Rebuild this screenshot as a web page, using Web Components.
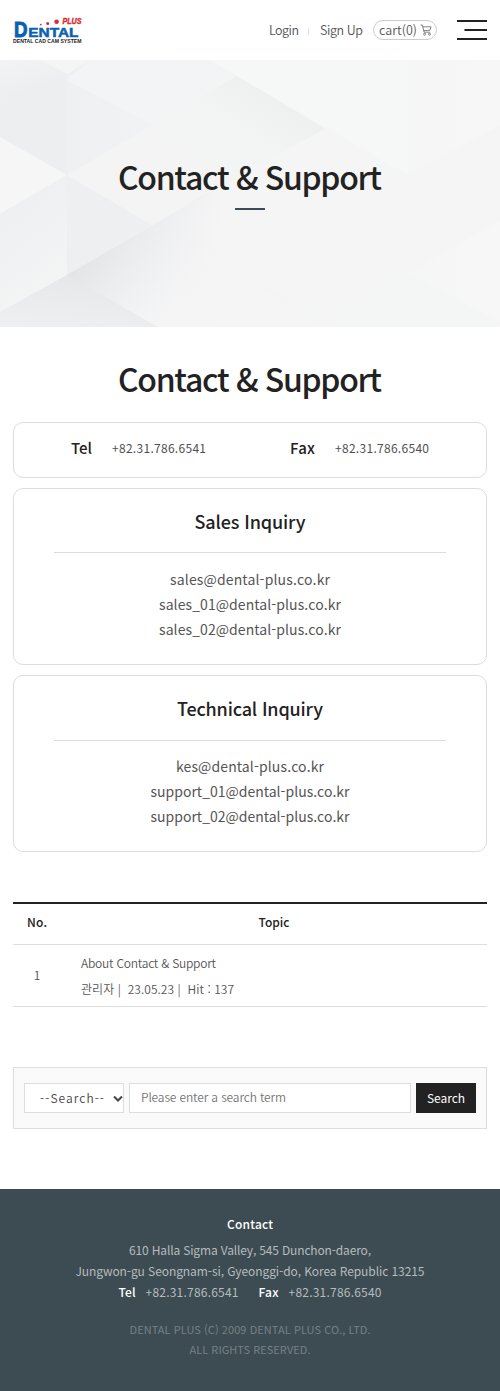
<!DOCTYPE html>
<html lang="ko">
<head>
<meta charset="utf-8">
<title>Contact &amp; Support</title>
<style>
body{margin:0;background:#fff;color:#222;font-family:"Noto Sans CJK KR","Noto Sans",sans-serif;font-size:13px}
</style>
</head>
<body>
<dp-page></dp-page>
<script>
const define = (name, html, setup) => {
  const tpl = document.createElement('template');
  tpl.innerHTML = html;
  customElements.define(name, class extends HTMLElement {
    connectedCallback() {
      if (this.shadowRoot) return;
      this.attachShadow({mode: 'open'}).append(tpl.content.cloneNode(true));
      if (setup) setup(this, this.shadowRoot);
    }
  });
};

/* A single line of text, tracked to the width given in "w". */
define('dp-text', `<style>
:host{display:inline-block;white-space:pre;text-align:left;flex:none}
span{display:inline-block}
</style><span><slot></slot></span>`, (host, root) => {
  const w = parseFloat(host.getAttribute('w'));
  const span = root.querySelector('span');
  const n = host.textContent.length;
  const natural = span.getBoundingClientRect().width;
  host.style.width = w + 'px';
  if (n > 1) span.style.letterSpacing = ((w - natural) / (n - 1)) + 'px';
});

define('dp-logo', `<style>:host{display:block;width:76px;height:30px}svg{display:block}</style>
<svg width="76" height="30" viewBox="12 16 76 30" font-family="Liberation Sans, sans-serif" font-weight="700">
<g fill="#0b62b0" stroke="#0b62b0" stroke-width=".5">
<text x="14" y="36.8" font-size="22.5" textLength="13.5" lengthAdjust="spacingAndGlyphs" stroke-width="1">D</text>
<text x="28.3" y="37" font-size="13" textLength="50.2" lengthAdjust="spacingAndGlyphs">ENTAL</text></g>
<g fill="#dc2a30"><circle cx="40.8" cy="24.6" r=".9"/><circle cx="47.7" cy="23.5" r="1.5"/><circle cx="56.6" cy="21.7" r="2.3"/>
<text x="62.5" y="24.2" font-size="8.2" font-style="italic" stroke="#dc2a30" stroke-width=".4" textLength="19" lengthAdjust="spacingAndGlyphs">PLUS</text></g>
<text x="13" y="43.2" font-size="4.9" fill="#222" textLength="68.5" lengthAdjust="spacingAndGlyphs">DENTAL CAD CAM SYSTEM</text>
</svg>`);

define('dp-header', `<style>
:host{display:flex;height:60px;padding:0 13px 0 12px;box-sizing:border-box;align-items:center;color:#555;font-weight:350;font-size:12.5px;line-height:20px}
dp-logo{margin:2px auto 0 0}
i{width:1px;height:7px;background:#ddd;margin:2px 11px 0 9px}
.cart{display:flex;align-items:center;box-sizing:border-box;width:64px;height:20px;border:1px solid #ccc;border-radius:10px;margin-left:10px;padding-left:5px;line-height:18px}
.cart svg{margin-left:3px}
.menu{margin-left:20px}
</style>
<dp-logo></dp-logo><dp-text w="30">Login</dp-text><i></i><dp-text w="43">Sign Up</dp-text>
<div class="cart"><dp-text w="38">cart(0)</dp-text>
<svg width="12" height="12" viewBox="0 0 12 12" fill="none" stroke="#666" stroke-width=".8"><path d="M.5 1H2.4L4.1 8.2H10M2.8 2.8H11L10 6.2 3.7 6.7"/><circle cx="4.6" cy="10.2" r="1"/><circle cx="9.5" cy="10.2" r="1"/></svg></div>
<svg class="menu" width="30" height="20" fill="#222"><path d="M0 0H30V2H0ZM7.5 9H30V11H7.5ZM0 18H30V20H0Z"/></svg>`);

define('dp-hero', `<style>
:host{display:grid;height:267px;overflow:hidden}
svg,div{grid-area:1/1}
div{display:flex;flex-direction:column;align-items:center;padding-top:96px;font-weight:500;font-size:32px;line-height:40px}
hr{width:30px;height:2px;border:0;margin:12px 0 0;background:#3d4c53}
</style>
<svg width="500" height="267">
<defs>
<linearGradient id="a"><stop stop-color="#eceef0"/><stop offset=".35" stop-color="#f2f3f4"/><stop offset="1" stop-color="#f7f7f7"/></linearGradient>
<linearGradient id="b" gradientUnits="userSpaceOnUse" x1="130" y1="178" x2="170" y2="248"><stop stop-color="#e1e3e5"/><stop offset="1" stop-color="#f3f4f5"/></linearGradient>
<linearGradient id="c" x1=".2" y1="0" x2=".6" y2="1"><stop stop-color="#eceef1"/><stop offset="1" stop-color="#f5f5f5"/></linearGradient>
<linearGradient id="d" x1=".6" y1="0" x2=".3" y2="1"><stop stop-color="#e5e7e9"/><stop offset="1" stop-color="#eeeff0"/></linearGradient>
<linearGradient id="e" gradientUnits="userSpaceOnUse" x1="285" y1="43" x2="260" y2="83"><stop stop-color="#eeefef"/><stop offset="1" stop-color="#f3f4f4"/></linearGradient>
<linearGradient id="f" gradientUnits="userSpaceOnUse" x1="120" y1="0" x2="250" y2="0"><stop stop-color="#f3f4f5"/><stop offset="1" stop-color="#f4f5f5" stop-opacity="0"/></linearGradient>
<linearGradient id="g" gradientUnits="userSpaceOnUse" x1="67" y1="0" x2="240" y2="0"><stop stop-color="#f5f5f6" stop-opacity="0"/><stop offset=".9" stop-color="#f5f5f6"/></linearGradient>
<linearGradient id="h" x1="0" y1="0" x2=".5" y2="1"><stop stop-color="#f1f3f4"/><stop offset="1" stop-color="#eaecef"/></linearGradient>
</defs>
<path fill="url(#a)" d="M0 0H500V267H0Z"/>
<path fill="url(#h)" d="M0 0H40L67 14 0 50Z"/>
<path fill="#eceef0" d="M0 50L67 14V115L0 77Z"/>
<path fill="#f5f5f6" d="M40 0H90L67 14Z"/>
<path fill="url(#f)" d="M90 0H210L237 16 152 65 67 20Z"/>
<path fill="#f6f6f6" d="M0 77L67 115 0 154Z"/>
<path fill="url(#c)" d="M0 154L67 115V215L0 252Z"/>
<path fill="#eeeff1" d="M67 115L152 165 67 215Z"/>
<path fill="#f4f4f5" d="M67 115L152 65 240 115 152 165Z"/>
<path fill="url(#e)" d="M152 65L237 16 325 69 240 115Z"/>
<path fill="url(#b)" d="M67 215L240 115V267H67Z"/>
<path fill="url(#g)" d="M67 215L240 115V267H67Z"/>
<path fill="url(#d)" d="M0 252L67 215 158 267H0Z"/>
<path fill="#f5f5f6" d="M240 115L325 69 408 115V215L325 255 240 215Z"/>
<path fill="#f6f7f7" d="M237 16L210 0H408V115Z"/>
<path fill="#f5f5f6" d="M408 115L500 65V160L408 213ZM240 215L325 267H240Z"/>
<path fill="#f4f5f5" d="M408 213L500 262V267H325Z"/>
</svg>
<div><dp-text w="264">Contact &amp; Support</dp-text><hr></div>`);

define('dp-panel', `<style>
:host{display:flex;box-sizing:border-box;border:1px solid #ddd;border-radius:10px;margin-bottom:10px}
</style><slot></slot>`);

define('dp-inquiry', `<style>
:host{display:block}
dp-panel{height:177px;flex-direction:column;align-items:center;padding:0 40px}
header{box-sizing:border-box;height:var(--head,64px);padding-top:18px;width:100%;border-bottom:1px solid #ddd;text-align:center;font-weight:500;font-size:18px;line-height:28px}
div{display:flex;flex-direction:column;align-items:center;padding-top:var(--gap,13.6px);color:#555;font-size:14px;line-height:25.2px;font-weight:400}
</style><dp-panel><header><slot name="title"></slot></header><div><slot></slot></div></dp-panel>`);

define('dp-board', `<style>
:host{display:block;margin-top:50px;border-top:2px solid #222;font-size:12px}
.r{display:grid;grid-template-columns:48px 1fr;border-bottom:1px solid #ddd}
.h{height:40px;line-height:35px;font-weight:500;text-align:center}
.b{height:61px;color:#555;font-weight:350;align-items:center}
.n{text-align:center;padding-bottom:3px}
.t{padding-left:20px;line-height:26px;display:flex;flex-direction:column}
</style>
<div class="r h"><div><dp-text w="20">No.</dp-text></div><div><dp-text w="31">Topic</dp-text></div></div>
<div class="r b"><div class="n">1</div><div class="t"><dp-text w="135">About Contact &amp; Support</dp-text><dp-text w="153">관리자 |  23.05.23 |  Hit : 137</dp-text></div></div>`);

define('dp-search', `<style>
:host{display:flex;gap:5px;box-sizing:border-box;height:62px;margin-top:60px;padding:15px 10px;border:1px solid #ddd;background:#fafafa;font-size:12px;line-height:28px;font-weight:350;color:#444}
div{box-sizing:border-box;height:30px;background:#fff;border:1px solid #ddd}
.s{width:100px;padding-left:15px;display:flex}
.s svg{margin:11px 0 0 9px}
.i{flex:1;padding-left:11px;color:#757575;line-height:26px}
.b{width:60px;background:#222;border-color:#222;color:#fff;text-align:center;font-weight:400;line-height:27px}
</style>
<div class="s"><dp-text w="64">--Search--</dp-text><svg width="10" height="8" fill="none" stroke="#444" stroke-width="2"><path d="M1 1.5L5 5.5 9 1.5"/></svg></div>
<div class="i"><dp-text w="145">Please enter a search term</dp-text></div>
<div class="b"><dp-text w="38">Search</dp-text></div>`);

define('dp-footer', `<style>
:host{display:flex;flex-direction:column;align-items:center;box-sizing:border-box;height:202px;margin-top:60px;padding-top:24px;background:#3d4c52;color:#b5bbbe;font-size:12px;line-height:21px}
b{font-weight:500;color:#fff}
.c{margin-bottom:5px}
.p{display:flex}
.p b+dp-text{margin-left:10px}
.p dp-text+b{margin-left:20px}
.k{display:flex;flex-direction:column;align-items:center;margin-top:17px;color:#748085;font-size:11px;line-height:20px}
</style>
<b class="c"><dp-text w="46">Contact</dp-text></b>
<dp-text w="242">610 Halla Sigma Valley, 545 Dunchon-daero,</dp-text>
<dp-text w="349">Jungwon-gu Seongnam-si, Gyeonggi-do, Korea Republic 13215</dp-text>
<div class="p"><b><dp-text w="17">Tel</dp-text></b><dp-text w="93">+82.31.786.6541</dp-text><b><dp-text w="20">Fax</dp-text></b><dp-text w="93">+82.31.786.6540</dp-text></div>
<div class="k"><dp-text w="241">DENTAL PLUS (C) 2009 DENTAL PLUS CO., LTD.</dp-text><dp-text w="121">ALL RIGHTS RESERVED.</dp-text></div>`);

define('dp-page', `<style>
:host{display:block}
main{padding:31px 13px 0}
h1{margin:0 0 24px;text-align:center;font-weight:500;font-size:32px;line-height:40px}
.tel{height:56px}
.tel div{flex:1;display:flex;justify-content:center;gap:20px;line-height:50px;font-size:12px;color:#505050}
b{font-weight:500;font-size:15px;color:#222}
</style>
<dp-header></dp-header><dp-hero></dp-hero>
<main>
<h1><dp-text w="264">Contact &amp; Support</dp-text></h1>
<dp-panel class="tel"><div style="padding-left:14px"><b><dp-text w="21">Tel</dp-text></b><dp-text w="94">+82.31.786.6541</dp-text></div><div style="padding-right:16px"><b><dp-text w="25">Fax</dp-text></b><dp-text w="94">+82.31.786.6540</dp-text></div></dp-panel>
<dp-inquiry><dp-text slot="title" w="111">Sales Inquiry</dp-text><dp-text w="160">sales@dental-plus.co.kr</dp-text><dp-text w="182">sales_01@dental-plus.co.kr</dp-text><dp-text w="182">sales_02@dental-plus.co.kr</dp-text></dp-inquiry>
<dp-inquiry style="--head:65px;--gap:12.8px"><dp-text slot="title" w="146">Technical Inquiry</dp-text><dp-text w="148">kes@dental-plus.co.kr</dp-text><dp-text w="199">support_01@dental-plus.co.kr</dp-text><dp-text w="199">support_02@dental-plus.co.kr</dp-text></dp-inquiry>
<dp-board></dp-board>
<dp-search></dp-search>
</main>
<dp-footer></dp-footer>`);
</script>
</body>
</html>
